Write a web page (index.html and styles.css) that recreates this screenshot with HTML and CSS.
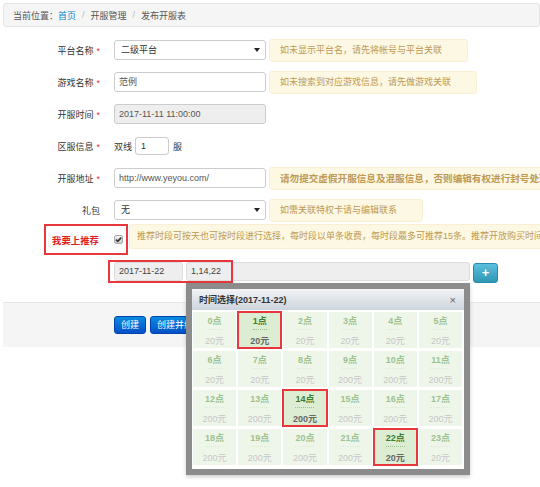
FILE: index.html
```html
<!DOCTYPE html>
<html lang="zh-CN">
<head>
<meta charset="utf-8">
<title>发布开服表</title>
<link rel="stylesheet" href="styles.css">
</head>
<body>
<div class="page">
  <div class="breadcrumb">
    <span>当前位置：</span><a class="crumb-link">首页</a><span class="divider">/</span><span>开服管理</span><span class="divider">/</span><span>发布开服表</span>
  </div>

  <div class="form">
    <div class="row">
      <div class="label">平台名称<em>*</em></div>
      <div class="field select"><span>二级平台</span><i class="caret"></i></div>
      <div class="tip">如未显示平台名，请先将帐号与平台关联</div>
    </div>
    <div class="row">
      <div class="label">游戏名称<em>*</em></div>
      <div class="field input">范例</div>
      <div class="tip">如未搜索到对应游戏信息，请先做游戏关联</div>
    </div>
    <div class="row">
      <div class="label">开服时间<em>*</em></div>
      <div class="field input disabled">2017-11-11 11:00:00</div>
    </div>
    <div class="row">
      <div class="label">区服信息<em>*</em></div>
      <div class="server">
        <span>双线</span>
        <div class="input small">1</div>
        <span>服</span>
      </div>
    </div>
    <div class="row clip">
      <div class="label">开服地址<em>*</em></div>
      <div class="field input">http://www.yeyou.com/</div>
      <div class="tip strong">请勿提交虚假开服信息及混服信息，否则编辑有权进行封号处理</div>
    </div>
    <div class="row">
      <div class="label">礼包</div>
      <div class="field select"><span>无</span><i class="caret"></i></div>
      <div class="tip">如需关联特权卡请与编辑联系</div>
    </div>
    <div class="row recommend clip">
      <div class="mark-box">
        <span class="rec-label">我要上推荐</span>
        <span class="checkbox"><svg viewBox="0 0 9 9" width="9" height="9"><path d="M2 4.6 L3.8 6.4 L7.2 2.6" fill="none" stroke="#333" stroke-width="1.6"/></svg></span>
      </div>
      <div class="tip wide">推荐时段可按天也可按时段进行选择，每时段以单条收费，每时段最多可推荐15条。推荐开放购买时间为开服前</div>
    </div>
    <div class="row dates">
      <div class="input date">2017-11-22</div>
      <div class="input hours">1,14,22</div>
      <button class="btn-add" type="button">+</button>
      <div class="mark-overlay"></div>
    </div>
  </div>

  <div class="actions">
    <button class="btn-primary" type="button">创建</button>
    <button class="btn-primary" type="button">创建并继续</button>
  </div>

  <div class="picker">
    <div class="picker-inner">
      <div class="picker-head"><span>时间选择(2017-11-22)</span><span class="close">×</span></div>
      <div class="grid">
        <div class="cell"><b>0点</b><span>20元</span></div>
        <div class="cell on"><b>1点</b><span>20元</span></div>
        <div class="cell"><b>2点</b><span>20元</span></div>
        <div class="cell"><b>3点</b><span>20元</span></div>
        <div class="cell"><b>4点</b><span>20元</span></div>
        <div class="cell"><b>5点</b><span>20元</span></div>
        <div class="cell"><b>6点</b><span>20元</span></div>
        <div class="cell"><b>7点</b><span>20元</span></div>
        <div class="cell"><b>8点</b><span>20元</span></div>
        <div class="cell"><b>9点</b><span>200元</span></div>
        <div class="cell"><b>10点</b><span>200元</span></div>
        <div class="cell"><b>11点</b><span>200元</span></div>
        <div class="cell"><b>12点</b><span>200元</span></div>
        <div class="cell"><b>13点</b><span>200元</span></div>
        <div class="cell on"><b>14点</b><span>200元</span></div>
        <div class="cell"><b>15点</b><span>200元</span></div>
        <div class="cell"><b>16点</b><span>200元</span></div>
        <div class="cell"><b>17点</b><span>200元</span></div>
        <div class="cell"><b>18点</b><span>200元</span></div>
        <div class="cell"><b>19点</b><span>200元</span></div>
        <div class="cell"><b>20点</b><span>200元</span></div>
        <div class="cell"><b>21点</b><span>200元</span></div>
        <div class="cell on"><b>22点</b><span>20元</span></div>
        <div class="cell"><b>23点</b><span>20元</span></div>
      </div>
    </div>
  </div>
</div>
</body>
</html>
```

FILE: styles.css
```css
html, body {
  margin: 0;
  padding: 0;
  overflow: hidden;
  background: #fff;
}
body {
  font-family: "Liberation Sans", "Noto Sans CJK SC", sans-serif;
  font-size: 9px;
  color: #333;
}
.page {
  position: relative;
  width: 540px;
  height: 487px;
  padding: 3px 0 0 3px;
  box-sizing: border-box;
  overflow: hidden;
}

/* breadcrumb */
.breadcrumb {
  height: 24px;
  box-sizing: border-box;
  border: 1px solid #e3e3e3;
  border-radius: 3px;
  background: #f5f5f5;
  display: flex;
  align-items: center;
  padding-left: 9px;
  color: #555;
  white-space: nowrap;
}
.crumb-link { color: #0088cc; }
.divider { color: #bbb; padding: 0 6px; }

/* form */
.form { padding-top: 7px; }
.row {
  display: flex;
  align-items: center;
  height: 32px;
  white-space: nowrap;
}
.clip { overflow: hidden; }
.label {
  width: 97px;
  flex: none;
  text-align: right;
  color: #333;
}
.label em {
  font-style: normal;
  color: #e9322d;
  margin-left: 3px;
}
.field {
  margin-left: 14px;
  width: 152px;
  flex: none;
}
.input, .select {
  height: 20px;
  box-sizing: border-box;
  border: 1px solid #ccc;
  border-radius: 3px;
  background: #fff;
  line-height: 18px;
  padding: 0 4px;
  color: #555;
}
.select {
  display: flex;
  justify-content: space-between;
  align-items: center;
  padding: 0 5px 0 6px;
  color: #333;
}
.caret {
  width: 0;
  height: 0;
  border-left: 3px solid transparent;
  border-right: 3px solid transparent;
  border-top: 4px solid #222;
}
.disabled { background: #eee; color: #555; }

.tip {
  margin-left: 3px;
  height: 23px;
  box-sizing: border-box;
  border: 1px solid #fbeed5;
  border-radius: 3px;
  background: #fcf8e3;
  color: #c09853;
  line-height: 21px;
  padding: 0 25px 0 10px;
  flex: none;
}
.tip.strong {
  font-weight: bold;
  font-size: 9.6px;
}

.server {
  margin-left: 14px;
  display: flex;
  align-items: center;
  color: #333;
}
.input.small {
  width: 34px;
  height: 18px;
  line-height: 16px;
  margin: 0 4px 0 3px;
  color: #333;
  padding-left: 5px;
}

/* recommend */
.row.recommend {
  height: 31px;
  margin-top: -2px;
  align-items: flex-start;
}
.mark-box {
  margin-left: 41px;
  width: 84px;
  height: 31px;
  box-sizing: border-box;
  border: 2px solid #e8383d;
  display: flex;
  align-items: center;
  padding-left: 6px;
  flex: none;
}
.rec-label {
  color: #e0201c;
  font-weight: bold;
  font-size: 9.4px;
}
.checkbox {
  margin-left: 15px;
  width: 9px;
  height: 9px;
  box-sizing: border-box;
  border: 1px solid #aaa;
  border-radius: 2px;
  background: linear-gradient(#f2f2f2, #cfcfcf);
  display: flex;
}
.checkbox svg { margin: -1px; }
.tip.wide {
  margin-left: 1px;
  height: 25px;
  line-height: 23px;
  padding-left: 7px;
}

/* dates row */
.row.dates {
  position: relative;
  height: 23px;
  margin-top: 5px;
  padding-left: 111px;
  align-items: center;
}
.input.date {
  width: 69px;
  height: 19px;
  line-height: 17px;
  background: #eee;
  border-color: #ddd;
  color: #444;
  padding-left: 4px;
}
.input.hours {
  width: 284px;
  height: 19px;
  line-height: 17px;
  margin-left: 3px;
  background: #eee;
  border-color: #ddd;
  color: #444;
  padding-left: 4px;
}
.btn-add {
  margin-left: 3px;
  width: 25px;
  height: 20px;
  padding: 0;
  border: 1px solid #2a8ab0;
  border-radius: 3px;
  background: linear-gradient(#5bc0de, #2f96b4);
  color: #fff;
  font-family: "Liberation Sans", sans-serif;
  font-weight: bold;
  font-size: 13px;
  line-height: 16px;
  margin-top: 2px;
}
.mark-overlay {
  position: absolute;
  left: 105px;
  top: 0;
  width: 125px;
  height: 23px;
  box-sizing: border-box;
  border: 2px solid #e8383d;
}

/* action bar */
.actions {
  margin-top: 19px;
  height: 45px;
  box-sizing: border-box;
  border-top: 1px solid #e5e5e5;
  background: #f5f5f5;
  padding: 13px 0 0 111px;
  display: flex;
  align-items: flex-start;
  gap: 4px;
}
.btn-primary {
  height: 18px;
  padding: 0 6px;
  border: 1px solid #0044aa;
  border-radius: 3px;
  background: linear-gradient(#0a8be0, #0450c8);
  color: #fff;
  font-family: "Liberation Sans", "Noto Sans CJK SC", sans-serif;
  font-size: 9px;
  line-height: 16px;
}

/* time picker overlay */
.picker {
  position: absolute;
  left: 186px;
  top: 283px;
  width: 284px;
  height: 192px;
  box-sizing: border-box;
  border: 6px solid #8c8c8c;
  box-shadow: 0 2px 4px rgba(0,0,0,0.2);
}
.picker-inner {
  background: #fff;
  height: 100%;
}
.picker-head {
  height: 21px;
  display: flex;
  justify-content: space-between;
  align-items: center;
  padding: 0 8px 0 7px;
  background: linear-gradient(#f2f4f6, #cdd4dc);
  font-weight: bold;
  color: #333;
}
.close {
  font-weight: normal;
  color: #666;
  font-size: 11px;
}
.grid {
  display: grid;
  grid-template-columns: repeat(6, 1fr);
  grid-auto-rows: 36px;
  gap: 3px 2px;
  padding: 2px 2px 4px 1px;
}
.cell {
  background: #eef6ea;
  display: flex;
  flex-direction: column;
  align-items: center;
  padding-top: 3px;
  box-sizing: border-box;
}
.cell b {
  line-height: 13px;
  height: 14px;
  color: #9cc28f;
  border-bottom: 1px dotted #dbe9d5;
}
.cell span {
  margin-top: 4px;
  line-height: 14px;
  color: #c6c6c6;
}
.cell.on {
  background: #dcedd3;
  outline: 2px solid #e8383d;
  outline-offset: -1px;
}
.cell.on b { color: #3c7d2d; border-bottom-color: #9cbf90; }
.cell.on span { color: #666; font-weight: bold; }
```
